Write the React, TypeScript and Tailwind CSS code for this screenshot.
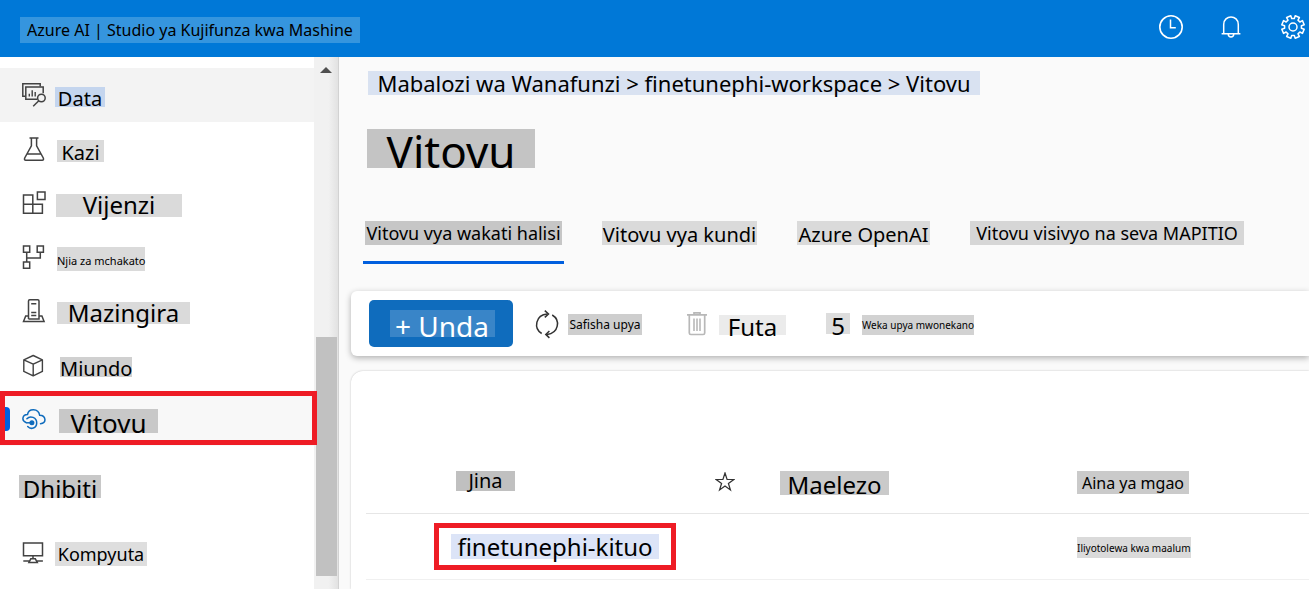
import React from 'react';

type MarkProps = { className: string; children: React.ReactNode };

function Mark({ className, children }: MarkProps) {
  return (
    <span className={`inline-flex shrink-0 items-center justify-center whitespace-nowrap ${className}`}>
      {children}
    </span>
  );
}

type IconProps = { children: React.ReactNode; className?: string };

function Icon({ children, className = 'size-6 text-[#424242]' }: IconProps) {
  return (
    <svg
      className={`shrink-0 ${className}`}
      viewBox="0 0 24 24"
      fill="none"
      stroke="currentColor"
      strokeWidth="1.5"
      aria-hidden="true"
    >
      {children}
    </svg>
  );
}

const DataIcon = () => (
  <Icon>
    <path d="M3.5 13.2H.8V.8h17.4v2.7" />
    <path d="M15 16.3H3.8V4h17.4v6.2" />
    <path d="M7.3 13.5v-2.7M10.2 13.5V7.3M13.2 13.5V9" strokeWidth="1.4" />
    <circle cx="19.4" cy="15" r="3.8" />
    <path d="m16.8 17.7-5.6 5.6" />
  </Icon>
);

const FlaskIcon = () => (
  <Icon>
    <path d="M7.5 1h9M9.4 1v7.8L2.7 21Q1.9 23.2 3.8 23.2H20.2Q22.1 23.2 21.3 21L14.6 8.8V1M5.3 16.9H18.7" />
  </Icon>
);

const ComponentsIcon = () => (
  <Icon>
    <path d="M1.5 4h9.3v18.3H1.5zM1.5 13.2h18.9v9.1h-9.6v-9.1M15.4 1H23v7.5h-7.6z" />
  </Icon>
);

const PipelineIcon = () => (
  <Icon>
    <path d="M1.5 1h6.2v6.2H1.5zM15.2 1h6.2v6.2h-6.2zM1.5 17h6.2v6.2H1.5zM4.7 7.2V17M4.7 13h13.6V7.2" />
  </Icon>
);

const EnvironmentIcon = () => (
  <Icon>
    <path d="M6.5 20V2q0-1.2 1.2-1.2h8.1q1.2 0 1.2 1.2v18H6.5M9.2 4.8h5.1M9.2 13.6h5.1M9.2 16.6h5.1M6.5 16.9H3.7l-2.2 5.7h20.6l-2.2-5.7H17" />
  </Icon>
);

const CubeIcon = () => (
  <Icon>
    <path d="m11.2 2.5 9.2 4.3v11.6l-9.2 4.5-9.4-4.5V6.8l9.4-4.3ZM1.8 6.8l9.4 4.4 9.2-4.4M11.2 11.2v11.7" strokeWidth="1.4" strokeLinejoin="round" />
  </Icon>
);

const CloudIcon = () => (
  <Icon className="size-6 text-[#0f6cbd]">
    <path d="M3.9 15.5C-.7 13.5.2 7.7 5.5 7.5 6.8 1.1 16.3 1.2 17.7 8.3c6.4.2 7.2 7.7.8 8.4" strokeLinecap="round" />
    <path d="M4.9 11.7c3.3-3.6 10-1.3 9.8 4.4-.2 5.200-5.900 6.800-9 3.500" strokeLinecap="round" />
    <circle cx="9.9" cy="15.8" r="2.5" fill="currentColor" stroke="none" />
    <path d="M4 15.8h6" />
  </Icon>
);

const ComputerIcon = () => (
  <Icon>
    <path d="M1.5 1h19v12.7h-19zM11 13.7v3M8.8 16.8h4.5l2 3.7H6.9zM1.3 19h5.9M15 19h5.9" />
  </Icon>
);

const RefreshIcon = () => (
  <Icon className="h-7 w-6 overflow-visible text-[#333333]">
    <path d="M6.7 21.5C-1.6 16.5.4 2.7 12.3 1.9M17.2 3c8.5 5 6.6 18.2-5.2 19.4" />
    <path d="m9.8-1.4 3.7 3.4-3.7 3.4M14.4 19l-3.6 3.4 3.6 3.5" />
  </Icon>
);

const TrashIcon = () => (
  <Icon className="size-6 text-[#b8b8b8]">
    <path d="M2 2.9h20M9 2.7V.8h6v1.9M4.3 2.9v18q0 1.6 1.6 1.6h12.2q1.6 0 1.6-1.6v-18" strokeWidth="1.7" />
    <path d="M9 6.5V19M12 6.5V19M15 6.5V19" strokeWidth="1.6" />
  </Icon>
);

const StarIcon = () => (
  <Icon className="ml-px size-5 text-[#333333]">
    <path d="m12 1.2 2.5 7.7 8.1.1-6.5 4.8 2.4 7.7-6.5-4.7-6.5 4.7 2.4-7.7L1.4 9l8.1-.1Z" />
  </Icon>
);

const ClockIcon = () => (
  <Icon className="size-6 text-white">
    <circle cx="12" cy="12" r="11.2" strokeWidth="1.6" />
    <path d="M11.5 4.5v8.2h5.3" />
  </Icon>
);

const BellIcon = () => (
  <Icon className="size-6 text-white">
    <path d="M4.7 18.8V9.5c0-10 14.6-10 14.6 0v9.3M2.6 18.8h18.8M9.2 19.3c.3 3.6 5.3 3.6 5.6 0" />
  </Icon>
);

const gearPoints = Array.from({ length: 8 }, (_, i) => {
  const at = (deg: number, r: number) => {
    const a = ((i * 45 + deg) * Math.PI) / 180;
    return `${(12 + r * Math.cos(a)).toFixed(2)},${(12 + r * Math.sin(a)).toFixed(2)}`;
  };
  return [at(9, 8.5), at(11, 11.4), at(34, 11.4), at(36, 8.5)].join(' ');
}).join(' ');

const GearIcon = () => (
  <Icon className="size-6 text-white">
    <polygon points={gearPoints} strokeLinejoin="round" />
    <circle cx="12" cy="12" r="4" />
  </Icon>
);

const navItems = [
  { label: 'Data', icon: DataIcon, row: 'bg-[#f3f3f3]', gap: 'gap-[9px]', mark: 'min-w-[50px] h-5 pt-1 bg-[#c4d5ee] text-[20px]' },
  { label: 'Kazi', icon: FlaskIcon, row: '', gap: 'gap-[11px]', mark: 'min-w-[47px] h-[22px] pt-1 bg-[#dadada] text-[20px]' },
  { label: 'Vijenzi', icon: ComponentsIcon, row: '', gap: 'gap-[10px]', mark: 'min-w-[126px] h-[23px] bg-[#dadada] text-[24px]' },
  { label: 'Njia za mchakato', icon: PipelineIcon, row: '', gap: 'gap-[11px]', mark: 'min-w-[87px] h-6 pt-1 bg-[#dadada] text-[11px]' },
  { label: 'Mazingira', icon: EnvironmentIcon, row: '', gap: 'gap-[11px]', mark: 'min-w-[133px] h-[22px] bg-[#dadada] text-[24px]' },
  { label: 'Miundo', icon: CubeIcon, row: '', gap: 'gap-[14px]', mark: 'min-w-[71px] h-5 pt-1 bg-[#d0d0d0] text-[20px]' },
];

const tabs = [
  { label: 'Vitovu vya wakati halisi', mark: 'min-w-[197px] h-6 pt-px bg-[#c6c6c6] text-[18px]' },
  { label: 'Vitovu vya kundi', mark: 'min-w-[155px] h-6 pt-1 bg-[#dadada] text-[20px]' },
  { label: 'Azure OpenAI', mark: 'min-w-[133px] h-6 pt-1 bg-[#dadada] text-[20px]' },
  { label: 'Vitovu visivyo na seva MAPITIO', mark: 'min-w-[274px] h-6 pt-px bg-[#d6d6d6] text-[18px]' },
];

export default function App() {
  return (
    <div className="flex min-h-screen flex-col bg-[#fafafa] font-['Noto_Sans',sans-serif] text-black">
      <header className="flex h-[57px] items-center justify-between bg-[#0078d7] pl-5 pr-1">
        <Mark className="mt-[2px] h-[26px] min-w-[340px] bg-[#3595de] pt-px text-[16px]">
          Azure AI | Studio ya Kujifunza kwa Mashine
        </Mark>
        <div className="flex items-center gap-9 pb-1">
          <button type="button" aria-label="Historia"><ClockIcon /></button>
          <button type="button" aria-label="Arifa"><BellIcon /></button>
          <button type="button" aria-label="Mipangilio" className="ml-[2px]"><GearIcon /></button>
        </div>
      </header>

      <div className="flex flex-1">
        <nav className="w-[314px] shrink-0 bg-white pt-[11px]">
          {navItems.map(({ label, icon: ItemIcon, row, gap, mark }) => (
            <a key={label} href="#" className={`flex h-[54px] items-center pl-[22px] ${gap} ${row}`}>
              <ItemIcon />
              <Mark className={`mt-1 ${mark}`}>{label}</Mark>
            </a>
          ))}
          <a href="#" aria-current="page" className="relative flex h-[54px] items-center gap-[13px] bg-[#f8f8f8] pl-[22px]">
            <span className="absolute left-1 h-6 w-[6px] rounded-r-sm bg-[#005fde]" />
            <CloudIcon />
            <Mark className="mt-1 h-6 min-w-[99px] bg-[#c8c8c8] pt-1 text-[26px]">Vitovu</Mark>
            <span className="absolute -right-[3px] -top-px bottom-px left-0 z-10 border-[5px] border-[#ee1c25]" />
          </a>
          <h2 className="flex h-[81px] items-center pl-[19px]">
            <Mark className="h-[23px] min-w-[82px] bg-[#c8c8c8] pt-1 text-[24px]">Dhibiti</Mark>
          </h2>
          <a href="#" className="flex h-[54px] items-center gap-[9px] pl-[22px]">
            <ComputerIcon />
            <Mark className="h-6 min-w-[92px] bg-[#dedede] pt-px text-[18px]">Kompyuta</Mark>
          </a>
        </nav>

        <div className="flex w-[25px] shrink-0 flex-col items-center border-r border-[#d2d2d2] bg-linear-to-r from-[#f1f1f1] from-60% to-[#e2e2e2] pb-[13px] pt-[10px]">
          <svg className="h-[6px] w-3" viewBox="0 0 12 6" aria-hidden="true">
            <path d="M0 6 6 0l6 6Z" fill="#505050" />
          </svg>
          <span className="flex-1" />
          <span className="h-[239px] w-[21px] bg-[#c1c1c1]" />
        </div>

        <main className="flex min-w-0 flex-1 flex-col pl-3">
          <div className="flex pl-[17px] pt-[14px]">
            <Mark className="h-6 min-w-[612px] bg-[#d9e2f1] text-[22px]">
              Mabalozi wa Wanafunzi &gt; finetunephi-workspace &gt; Vitovu
            </Mark>
          </div>
          <h1 className="flex pl-4 pt-[34px]">
            <Mark className="h-[39px] min-w-[168px] bg-[#c4c4c4] pt-1 text-[44px]">Vitovu</Mark>
          </h1>
          <div role="tablist" className="flex gap-9 pl-3 pt-[53px]">
            {tabs.map(({ label, mark }, index) => (
              <button
                key={label}
                type="button"
                role="tab"
                aria-selected={index === 0}
                className={`flex h-[43px] items-start border-b-[3px] px-[2px] ${index === 0 ? 'border-[#005fde]' : 'border-transparent'}`}
              >
                <Mark className={mark}>{label}</Mark>
              </button>
            ))}
          </div>

          <div className="mt-[27px] flex h-[65px] items-center rounded-l-md bg-white pl-[18px] shadow-[0_2px_6px_rgba(0,0,0,0.3)]">
            <button type="button" className="flex h-[47px] w-36 items-center justify-center rounded-[5px] bg-[#0f6cbd] pl-[2px] text-white">
              <Mark className="h-[27px] min-w-[105px] bg-[#3985c8] pt-1 text-[28px]">+ Unda</Mark>
            </button>
            <button type="button" className="ml-[22px] flex items-center gap-[9px]">
              <RefreshIcon />
              <Mark className="mt-[2px] h-[21px] min-w-[74px] bg-[#cecece] pt-px text-[12px]">Safisha upya</Mark>
            </button>
            <button type="button" className="ml-[43px] flex items-center gap-[10px]">
              <TrashIcon />
              <Mark className="mt-[2px] h-5 min-w-[67px] bg-[#ebebeb] pt-1 text-[24px]">Futa</Mark>
            </button>
            <button type="button" className="ml-10 flex items-center gap-3">
              <Mark className="h-[21px] min-w-6 bg-[#dddddd] pt-1 text-[24px]">5</Mark>
              <Mark className="mt-[2px] h-5 min-w-[105px] bg-[#d2d2d2] pt-px text-[10px]">Weka upya mwonekano</Mark>
            </button>
          </div>

          <section className="mt-[15px] flex-1 rounded-tl-xl bg-white pl-[15px] pt-20 shadow-[0_0_2px_rgba(0,0,0,0.25)]">
            <table className="w-full table-fixed border-collapse text-left">
              <colgroup>
                <col className="w-[68px]" />
                <col className="w-[280px]" />
                <col className="w-[66px]" />
                <col className="w-[297px]" />
                <col />
              </colgroup>
              <thead>
                <tr className="h-[62px] border-b border-[#e6e6e6]">
                  <td />
                  <th scope="col" className="pl-[22px] font-normal">
                    <Mark className="mb-1 h-5 min-w-[59px] bg-[#c0c0c0] align-middle text-[20px]">Jina</Mark>
                  </th>
                  <th scope="col" aria-label="Kipendwa"><StarIcon /></th>
                  <th scope="col" className="font-normal">
                    <Mark className="h-6 min-w-[109px] bg-[#cacaca] pt-1 align-middle text-[24px]">Maelezo</Mark>
                  </th>
                  <th scope="col" className="font-normal">
                    <Mark className="h-[23px] min-w-[112px] bg-[#cacaca] pt-px align-middle text-[16px]">Aina ya mgao</Mark>
                  </th>
                </tr>
              </thead>
              <tbody>
                <tr className="h-[66px] border-b border-[#f0f0f0]">
                  <td />
                  <td>
                    <a href="#" className="mt-px inline-flex h-[47px] items-center border-[5px] border-[#ee1c25] px-3 align-middle">
                      <Mark className="h-[25px] min-w-[208px] bg-[#dce4f7] pt-px text-[24px]">finetunephi-kituo</Mark>
                    </a>
                  </td>
                  <td />
                  <td />
                  <td>
                    <Mark className="h-[21px] min-w-[98px] bg-[#dadada] pt-px align-middle text-[10px]">Iliyotolewa kwa maalum</Mark>
                  </td>
                </tr>
              </tbody>
            </table>
          </section>
        </main>
      </div>
    </div>
  );
}
